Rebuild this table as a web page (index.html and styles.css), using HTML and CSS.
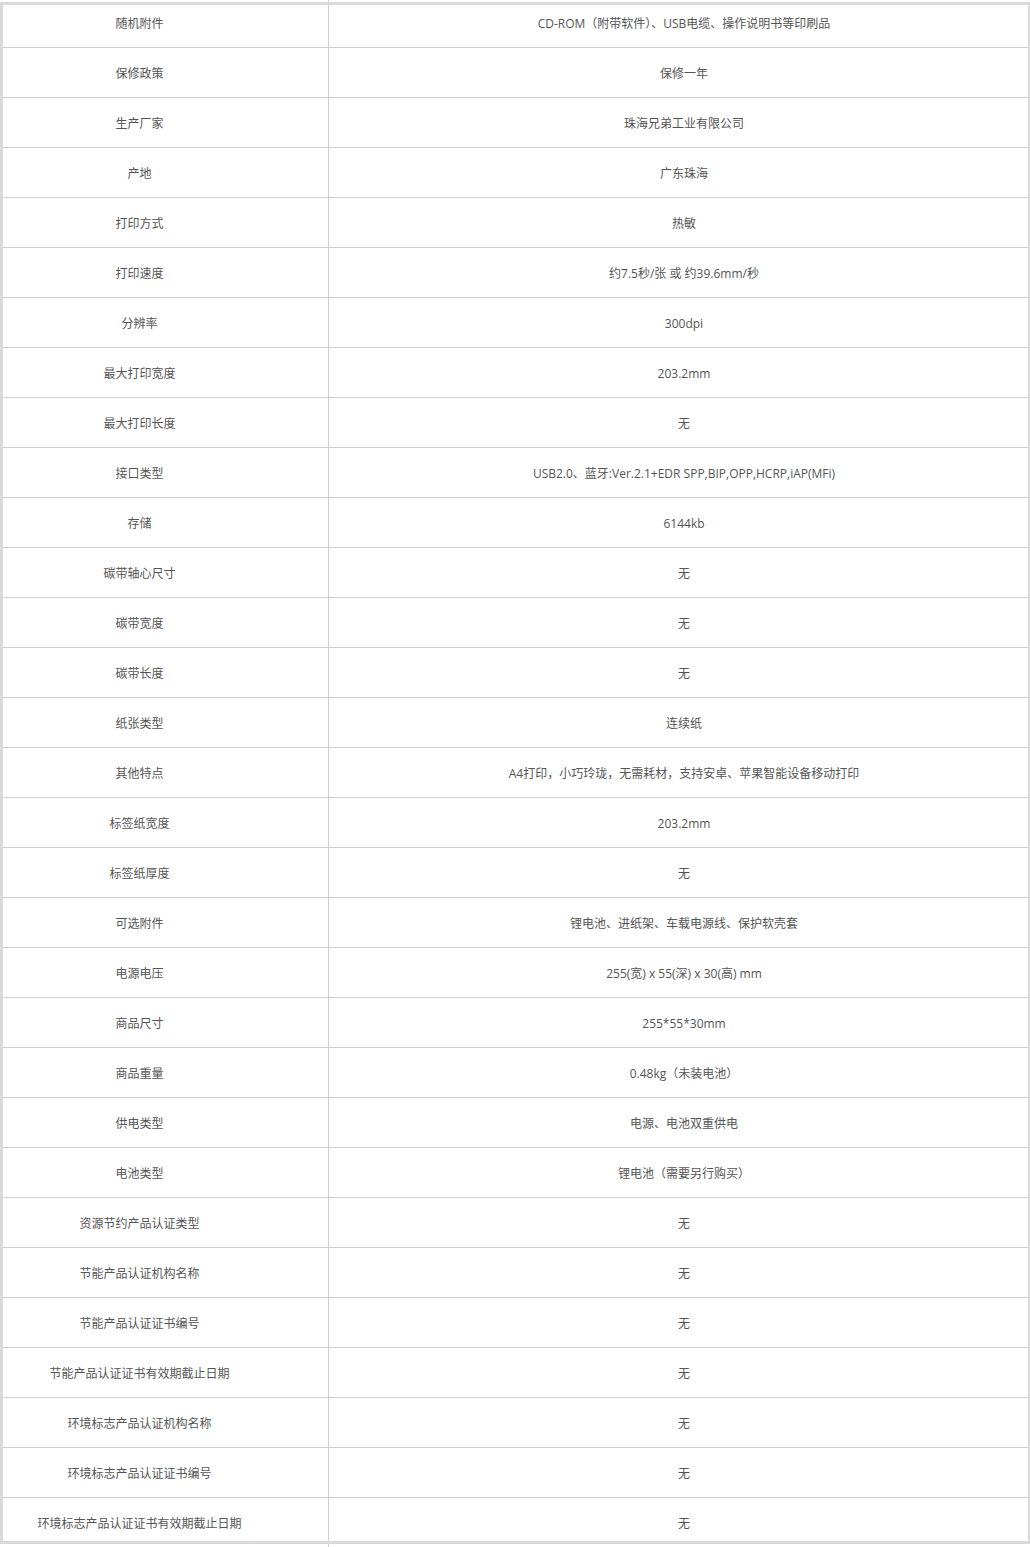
FILE: index.html
```html
<!DOCTYPE html>
<html lang="zh-CN">
<head>
<meta charset="utf-8">
<title>参数</title>
<link rel="stylesheet" href="styles.css">
</head>
<body>
<div class="sheet">
  <div class="spec">
    <div class="row"><div class="k">随机附件</div><div class="v">CD-ROM（附带软件）、USB电缆、操作说明书等印刷品</div></div>
    <div class="row"><div class="k">保修政策</div><div class="v">保修一年</div></div>
    <div class="row"><div class="k">生产厂家</div><div class="v">珠海兄弟工业有限公司</div></div>
    <div class="row"><div class="k">产地</div><div class="v">广东珠海</div></div>
    <div class="row"><div class="k">打印方式</div><div class="v">热敏</div></div>
    <div class="row"><div class="k">打印速度</div><div class="v">约7.5秒/张 或 约39.6mm/秒</div></div>
    <div class="row"><div class="k">分辨率</div><div class="v">300dpi</div></div>
    <div class="row"><div class="k">最大打印宽度</div><div class="v">203.2mm</div></div>
    <div class="row"><div class="k">最大打印长度</div><div class="v">无</div></div>
    <div class="row"><div class="k">接口类型</div><div class="v">USB2.0、蓝牙:Ver.2.1+EDR SPP,BIP,OPP,HCRP,iAP(MFi)</div></div>
    <div class="row"><div class="k">存储</div><div class="v">6144kb</div></div>
    <div class="row"><div class="k">碳带轴心尺寸</div><div class="v">无</div></div>
    <div class="row"><div class="k">碳带宽度</div><div class="v">无</div></div>
    <div class="row"><div class="k">碳带长度</div><div class="v">无</div></div>
    <div class="row"><div class="k">纸张类型</div><div class="v">连续纸</div></div>
    <div class="row"><div class="k">其他特点</div><div class="v">A4打印，小巧玲珑，无需耗材，支持安卓、苹果智能设备移动打印</div></div>
    <div class="row"><div class="k">标签纸宽度</div><div class="v">203.2mm</div></div>
    <div class="row"><div class="k">标签纸厚度</div><div class="v">无</div></div>
    <div class="row"><div class="k">可选附件</div><div class="v">锂电池、进纸架、车载电源线、保护软壳套</div></div>
    <div class="row"><div class="k">电源电压</div><div class="v">255(宽) x 55(深) x 30(高) mm</div></div>
    <div class="row"><div class="k">商品尺寸</div><div class="v">255*55*30mm</div></div>
    <div class="row"><div class="k">商品重量</div><div class="v">0.48kg（未装电池）</div></div>
    <div class="row"><div class="k">供电类型</div><div class="v">电源、电池双重供电</div></div>
    <div class="row"><div class="k">电池类型</div><div class="v">锂电池（需要另行购买）</div></div>
    <div class="row"><div class="k">资源节约产品认证类型</div><div class="v">无</div></div>
    <div class="row"><div class="k">节能产品认证机构名称</div><div class="v">无</div></div>
    <div class="row"><div class="k">节能产品认证证书编号</div><div class="v">无</div></div>
    <div class="row"><div class="k">节能产品认证证书有效期截止日期</div><div class="v">无</div></div>
    <div class="row"><div class="k">环境标志产品认证机构名称</div><div class="v">无</div></div>
    <div class="row"><div class="k">环境标志产品认证证书编号</div><div class="v">无</div></div>
    <div class="row"><div class="k">环境标志产品认证证书有效期截止日期</div><div class="v">无</div></div>
  </div>
  <div class="frame"></div>
</div>
</body>
</html>
```

FILE: styles.css
```css
html, body {
  margin: 0;
  padding: 0;
  background: #fff;
  overflow: hidden;
}
body {
  font-family: "Open Sans", "Noto Sans CJK SC", sans-serif;
  font-size: 12px;
  color: #555;
}
.sheet {
  position: relative;
  width: 1030px;
  height: 1547px;
  overflow: hidden;
}
.spec {
  margin-top: -2px;
}
.row {
  display: grid;
  grid-template-columns: 329px 1fr;
  height: 50px;
  box-sizing: border-box;
  border-bottom: 1px solid #cfcfcf;
}
.k, .v {
  display: flex;
  align-items: center;
  justify-content: center;
  white-space: nowrap;
  line-height: 16px;
  box-sizing: border-box;
  padding-top: 2px;
}
.k {
  border-right: 1px solid #cfcfcf;
  padding-right: 49px;
}
.v {
  padding-left: 9px;
}
.frame {
  position: absolute;
  left: 0;
  top: 2px;
  width: 1030px;
  height: 1542px;
  box-sizing: border-box;
  border: 3px solid #dadada;
  border-right-width: 2px;
  pointer-events: none;
}
```
